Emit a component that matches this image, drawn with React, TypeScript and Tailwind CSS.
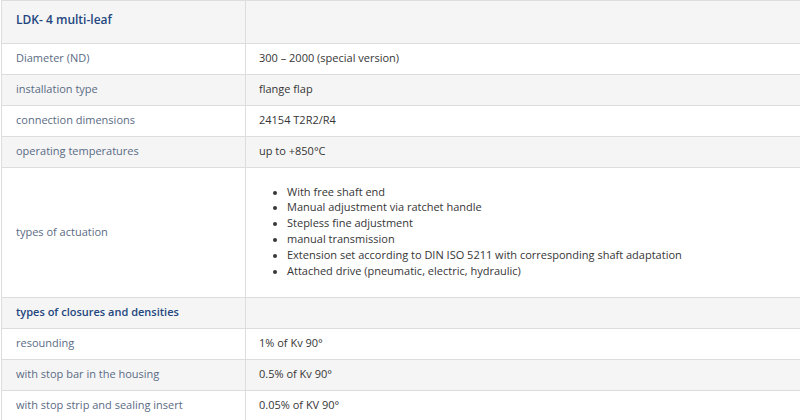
const rows: { label: string; value: string; shade?: boolean }[] = [
  { label: 'Diameter (ND)', value: '300 – 2000 (special version)' },
  { label: 'installation type', value: 'flange flap', shade: true },
  { label: 'connection dimensions', value: '24154 T2R2/R4' },
  { label: 'operating temperatures', value: 'up to +850°C', shade: true },
];

const closures: { label: string; value: string; shade?: boolean }[] = [
  { label: 'resounding', value: '1% of Kv 90°' },
  { label: 'with stop bar in the housing', value: '0.5% of Kv 90°', shade: true },
  { label: 'with stop strip and sealing insert', value: '0.05% of KV 90°' },
];

const actuation = [
  'With free shaft end',
  'Manual adjustment via ratchet handle',
  'Stepless fine adjustment',
  'manual transmission',
  'Extension set according to DIN ISO 5211 with corresponding shaft adaptation',
  'Attached drive (pneumatic, electric, hydraulic)',
];

function Row({ label, value, shade }: { label: string; value: string; shade?: boolean }) {
  return (
    <div className={`flex h-[31px] pb-[2px] border-b border-[#dddddd] ${shade ? 'bg-[#f5f5f5]' : 'bg-white'}`}>
      <div className="w-[244px] shrink-0 border-r border-[#dddddd] -mb-[2px] pb-[2px] pl-[14px] flex items-center text-[#5a6b84]">
        {label}
      </div>
      <div className="flex-1 pl-[13px] flex items-center text-[#363636]">{value}</div>
    </div>
  );
}

function Heading({ title, h, size, pad }: { title: string; h: string; size: string; pad: string }) {
  return (
    <div className={`flex ${h} border-b border-[#dddddd] bg-[#f5f5f5]`}>
      <div className={`w-[244px] shrink-0 border-r border-[#dddddd] pl-[14px] flex items-center font-semibold text-[#24477e] ${size} ${pad}`}>
        {title}
      </div>
      <div className="flex-1" />
    </div>
  );
}

export default function App() {
  return (
    <div
      className="w-[800px] h-[420px] overflow-hidden bg-white pl-px text-[11px] leading-[16px]"
      style={{ fontFamily: '"Open Sans", "Liberation Sans", sans-serif' }}
    >
      <div className="w-[900px] border-t border-l border-[#dddddd]">
        <Heading title="LDK- 4 multi-leaf" h="h-[43px]" size="text-[12px]" pad="pb-[4px]" />
        {rows.map((r) => (
          <Row key={r.label} {...r} />
        ))}

        {/* types of actuation */}
        <div className="flex h-[130px] border-b border-[#dddddd] bg-white">
          <div className="w-[244px] shrink-0 border-r border-[#dddddd] pl-[14px] pb-[2px] flex items-center text-[#5a6b84]">
            types of actuation
          </div>
          <div className="flex-1 pl-[13px] pb-[3px] flex items-center text-[#363636]">
            <ul className="list-disc pl-[28px] leading-[15.8px] marker:text-[10px]">
              {actuation.map((a) => (
                <li key={a}>{a}</li>
              ))}
            </ul>
          </div>
        </div>

        <Heading title="types of closures and densities" h="h-[31px]" size="text-[11px]" pad="pb-[2px]" />
        {closures.map((r) => (
          <Row key={r.label} {...r} />
        ))}
      </div>
    </div>
  );
}
